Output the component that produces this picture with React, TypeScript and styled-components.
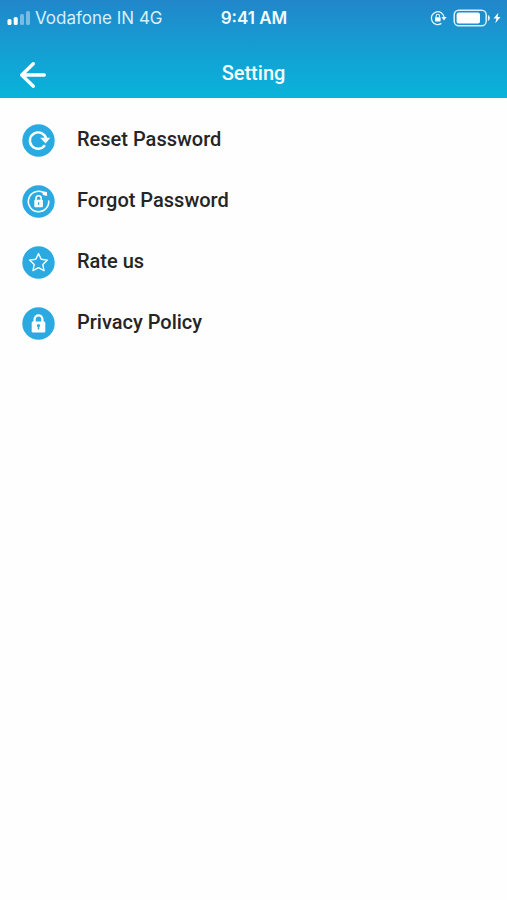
import React from "react";
import styled, { createGlobalStyle } from "styled-components";

const GlobalStyle = createGlobalStyle`
  *, *::before, *::after { box-sizing: border-box; }
  body { margin: 0; background: #fefefe; color: #252525; font-family: Roboto, sans-serif; }
  svg { display: block; flex: none; }
`;

const Page = styled.div`
  min-height: 100vh;
`;

const Top = styled.header`
  background: linear-gradient(180deg, #2186ca 0%, #169cd2 45%, #08b4da 100%);
  color: #f4fcff;
`;

const StatusBar = styled.div`
  display: grid;
  grid-template-columns: 1fr auto 1fr;
  align-items: center;
  height: 36px;
  padding: 0 6px 0 7px;
`;

const Carrier = styled.div`
  display: flex;
  align-items: center;
  gap: 4px;
  font: 400 17px/24px Inter, sans-serif;
  color: #d9f0fb;
  white-space: nowrap;
`;

const Clock = styled.time`
  font: 600 17px/24px Inter, sans-serif;
`;

const Indicators = styled.div`
  display: flex;
  align-items: center;
  justify-content: flex-end;
  gap: 6px;
`;

const Power = styled.div`
  display: flex;
  align-items: center;
  gap: 2px;
`;

const TitleBar = styled.div`
  display: grid;
  grid-template-columns: 1fr auto 1fr;
  align-items: center;
  height: 62px;
  padding: 12px 16px 0;
`;

const BackButton = styled.button`
  display: flex;
  justify-self: start;
  padding: 4px 0 0;
  border: 0;
  background: none;
  color: #fff;
  cursor: pointer;
`;

const Title = styled.h1`
  margin: 0;
  font-size: 20px;
  line-height: 28px;
  font-weight: 500;
`;

const Menu = styled.ul`
  display: flex;
  flex-direction: column;
  gap: 21px;
  margin: 0;
  padding: 22px;
  list-style: none;
`;

const MenuButton = styled.button`
  display: flex;
  align-items: center;
  gap: 22px;
  width: 100%;
  height: 40px;
  padding: 0;
  border: 0;
  background: none;
  color: inherit;
  font: 500 20px/28px Roboto, sans-serif;
  text-align: left;
  cursor: pointer;
`;

const Label = styled.span`
  padding-bottom: 2px;
`;

const SignalIcon = () => (
  <svg width="24" height="16" viewBox="0 0 24 16" fill="#fff" aria-hidden="true">
    <rect x="0.5" y="9" width="4" height="6" rx="1.5" />
    <rect x="6.7" y="7" width="4" height="8" rx="1.5" />
    <rect x="13" y="4" width="4" height="11" rx="1.5" opacity=".4" />
    <rect x="19" y="1" width="4" height="14" rx="1.5" opacity=".4" />
  </svg>
);

const RotationLockIcon = () => (
  <svg width="17" height="16" viewBox="0 0 17 16" fill="none" stroke="#e9f7fd" aria-hidden="true">
    <path d="M11.4 13.4A6.4 6.4 0 1 1 14.1 7.2" strokeWidth="1.3" />
    <path d="M11.4 7h5.2L14 10.5z" fill="#e9f7fd" stroke="none" />
    <rect x="5" y="7.2" width="5.6" height="4.3" rx=".7" fill="#fff" stroke="none" />
    <path d="M6.1 7.5V6a1.7 1.7 0 0 1 3.4 0v1.5" strokeWidth="1.1" />
  </svg>
);

const BatteryIcon = () => (
  <svg width="38" height="18" viewBox="0 0 38 18" aria-hidden="true">
    <rect x="1.2" y="1.2" width="32" height="15.6" rx="4.6" fill="none" stroke="#d9effa" strokeWidth="1.5" />
    <rect x="3.6" y="3.6" width="23.4" height="10.8" rx="2.2" fill="#fff" />
    <path d="M34.9 6c2.6.9 2.6 5.1 0 6z" fill="#d9effa" />
  </svg>
);

const BoltIcon = () => (
  <svg width="8" height="12" viewBox="0 0 8 12" fill="#fff" aria-hidden="true">
    <path d="M5.4.7.5 6.6h2.9L2.3 11.3 7.5 5H4.6z" />
  </svg>
);

const BackIcon = () => (
  <svg width="32" height="28" viewBox="0 0 32 28" fill="none" stroke="currentColor" strokeWidth="3.4" strokeLinecap="round" strokeLinejoin="round" aria-hidden="true">
    <path d="M28.3 14H5.7M17.3 2.8 5.7 14l11.6 11.2" />
  </svg>
);

const Disc = ({ children }: { children: React.ReactNode }) => (
  <svg width="33" height="33" viewBox="0 0 33 33" fill="none" stroke="#fff" aria-hidden="true">
    <circle cx="16.5" cy="16.5" r="16.2" fill="#2baae2" stroke="none" />
    {children}
  </svg>
);

const ResetIcon = () => (
  <Disc>
    <path d="M22.9 21.2A8.2 8.2 0 1 1 24.1 14.8" strokeWidth="2.4" />
    <path d="M18.2 13.8h10.1l-4.7 5.6z" fill="#fff" stroke="none" />
  </Disc>
);

const ForgotIcon = () => (
  <Disc>
    <path d="M21.5 7.6A10.2 10.2 0 1 0 26.7 15.5" strokeWidth="1.6" />
    <path d="M20.4 6.3l4.6.7.1 4.1-4.3-1z" fill="#fff" stroke="none" />
    <rect x="12.3" y="14.8" width="8.6" height="7.4" rx="1" fill="#fff" stroke="none" />
    <path d="M14 15v-1.7a2.6 2.6 0 0 1 5.2 0V15" strokeWidth="1.6" />
    <path d="M16.6 17.2v2.7" stroke="#2baae2" strokeWidth="1.3" />
  </Disc>
);

const StarIcon = () => (
  <Disc>
    <path d="M16.5 7.6l2.7 5.7 6.2.8-4.6 4.3 1.2 6.2-5.5-3-5.5 3 1.2-6.2-4.6-4.3 6.2-.8z" strokeWidth="1.4" strokeLinejoin="round" />
  </Disc>
);

const PrivacyIcon = () => (
  <Disc>
    <rect x="9.7" y="14.4" width="13.6" height="11.2" rx="1.4" fill="#fff" stroke="none" />
    <path d="M12.6 15v-2.7a3.9 3.9 0 0 1 7.8 0V15" strokeWidth="2.3" />
    <circle cx="16.5" cy="18.6" r="1.6" fill="#2baae2" stroke="none" />
    <path d="M16.5 18.5v4" stroke="#2baae2" strokeWidth="1.5" />
  </Disc>
);

const items = [
  { label: "Reset Password", Icon: ResetIcon },
  { label: "Forgot Password", Icon: ForgotIcon },
  { label: "Rate us", Icon: StarIcon },
  { label: "Privacy Policy", Icon: PrivacyIcon },
];

export default function App() {
  return (
    <Page>
      <GlobalStyle />
      <Top>
        <StatusBar>
          <Carrier><SignalIcon />Vodafone IN 4G</Carrier>
          <Clock>9:41 AM</Clock>
          <Indicators>
            <RotationLockIcon />
            <Power><BatteryIcon /><BoltIcon /></Power>
          </Indicators>
        </StatusBar>
        <TitleBar>
          <BackButton type="button" aria-label="Back"><BackIcon /></BackButton>
          <Title>Setting</Title>
        </TitleBar>
      </Top>
      <main>
        <Menu>
          {items.map(({ label, Icon }) => (
            <li key={label}>
              <MenuButton type="button"><Icon /><Label>{label}</Label></MenuButton>
            </li>
          ))}
        </Menu>
      </main>
    </Page>
  );
}
